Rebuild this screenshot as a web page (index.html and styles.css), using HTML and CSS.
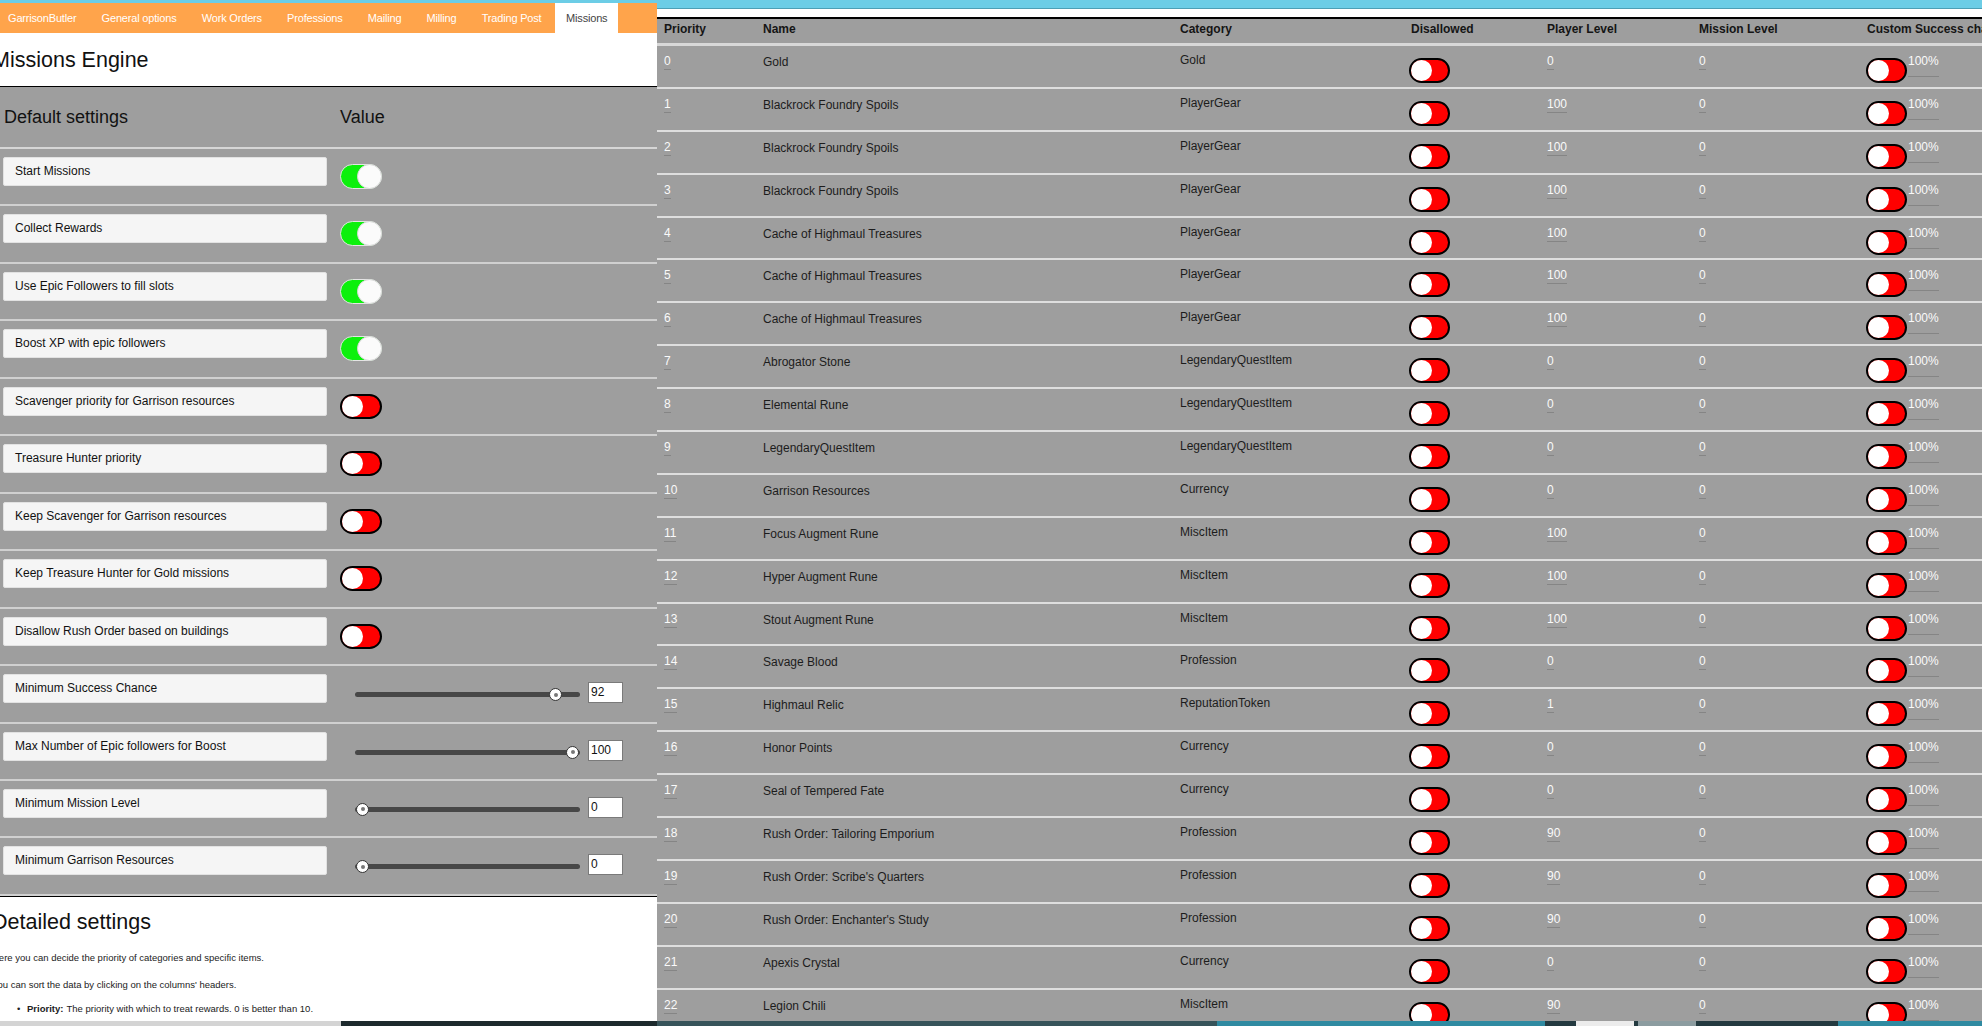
FILE: index.html
```html
<!DOCTYPE html>
<html>
<head>
<meta charset="utf-8">
<title>GarrisonButler - Missions</title>
<link rel="stylesheet" href="styles.css">
</head>
<body>
<div class="main">
  <div class="left">
    <div class="topstrip"></div>
    <div class="tabs">
      <div class="tab first">GarrisonButler</div>
      <div class="tab">General options</div>
      <div class="tab">Work Orders</div>
      <div class="tab">Professions</div>
      <div class="tab">Mailing</div>
      <div class="tab">Milling</div>
      <div class="tab">Trading Post</div>
      <div class="tab active">Missions</div>
    </div>
    <div class="head-area">
      <h1 class="shift">Missions Engine</h1>
    </div>
    <div class="gray">
      <div class="ghead"><div class="gh1">Default settings</div><div class="gh2">Value</div></div>
      <div class="grow"><div class="lbl">Start Missions</div><span class="tg on"></span></div>
      <div class="grow"><div class="lbl">Collect Rewards</div><span class="tg on"></span></div>
      <div class="grow"><div class="lbl">Use Epic Followers to fill slots</div><span class="tg on"></span></div>
      <div class="grow"><div class="lbl">Boost XP with epic followers</div><span class="tg on"></span></div>
      <div class="grow"><div class="lbl">Scavenger priority for Garrison resources</div><span class="tg off"></span></div>
      <div class="grow"><div class="lbl">Treasure Hunter priority</div><span class="tg off"></span></div>
      <div class="grow"><div class="lbl">Keep Scavenger for Garrison resources</div><span class="tg off"></span></div>
      <div class="grow"><div class="lbl">Keep Treasure Hunter for Gold missions</div><span class="tg off"></span></div>
      <div class="grow"><div class="lbl">Disallow Rush Order based on buildings</div><span class="tg off"></span></div>
      <div class="grow"><div class="lbl">Minimum Success Chance</div><div class="slider"><span class="thumb" style="--v:92"></span></div><div class="num">92</div></div>
      <div class="grow"><div class="lbl">Max Number of Epic followers for Boost</div><div class="slider"><span class="thumb" style="--v:100"></span></div><div class="num">100</div></div>
      <div class="grow"><div class="lbl">Minimum Mission Level</div><div class="slider"><span class="thumb" style="--v:0"></span></div><div class="num">0</div></div>
      <div class="grow"><div class="lbl">Minimum Garrison Resources</div><div class="slider"><span class="thumb" style="--v:0"></span></div><div class="num">0</div></div>
    </div>
    <div class="detail">
      <div class="shift">
        <h2>Detailed settings</h2>
        <p class="p1">Here you can decide the priority of categories and specific items.</p>
        <p class="p2">You can sort the data by clicking on the columns' headers.</p>
        <ul><li><b>Priority:</b> The priority with which to treat rewards. 0 is better than 10.</li></ul>
      </div>
    </div>
  </div>

  <div class="right">
    <div class="rtop"></div>
    <div class="rwhite"></div>
    <div class="thead">
      <div class="c">Priority</div><div class="c">Name</div><div class="c">Category</div><div class="c">Disallowed</div><div class="c">Player Level</div><div class="c">Mission Level</div><div class="c">Custom Success chance</div>
    </div>
    <div class="trow"><div class="c pri"><span class="ed">0</span></div><div class="c name">Gold</div><div class="c cat">Gold</div><div class="c dis"><span class="tg off sm"></span></div><div class="c pl"><span class="ed">0</span></div><div class="c ml"><span class="ed">0</span></div><div class="c cus"><span class="tg off sm"></span><span class="pct">100%</span></div></div>
    <div class="trow"><div class="c pri"><span class="ed">1</span></div><div class="c name">Blackrock Foundry Spoils</div><div class="c cat">PlayerGear</div><div class="c dis"><span class="tg off sm"></span></div><div class="c pl"><span class="ed">100</span></div><div class="c ml"><span class="ed">0</span></div><div class="c cus"><span class="tg off sm"></span><span class="pct">100%</span></div></div>
    <div class="trow"><div class="c pri"><span class="ed">2</span></div><div class="c name">Blackrock Foundry Spoils</div><div class="c cat">PlayerGear</div><div class="c dis"><span class="tg off sm"></span></div><div class="c pl"><span class="ed">100</span></div><div class="c ml"><span class="ed">0</span></div><div class="c cus"><span class="tg off sm"></span><span class="pct">100%</span></div></div>
    <div class="trow"><div class="c pri"><span class="ed">3</span></div><div class="c name">Blackrock Foundry Spoils</div><div class="c cat">PlayerGear</div><div class="c dis"><span class="tg off sm"></span></div><div class="c pl"><span class="ed">100</span></div><div class="c ml"><span class="ed">0</span></div><div class="c cus"><span class="tg off sm"></span><span class="pct">100%</span></div></div>
    <div class="trow"><div class="c pri"><span class="ed">4</span></div><div class="c name">Cache of Highmaul Treasures</div><div class="c cat">PlayerGear</div><div class="c dis"><span class="tg off sm"></span></div><div class="c pl"><span class="ed">100</span></div><div class="c ml"><span class="ed">0</span></div><div class="c cus"><span class="tg off sm"></span><span class="pct">100%</span></div></div>
    <div class="trow"><div class="c pri"><span class="ed">5</span></div><div class="c name">Cache of Highmaul Treasures</div><div class="c cat">PlayerGear</div><div class="c dis"><span class="tg off sm"></span></div><div class="c pl"><span class="ed">100</span></div><div class="c ml"><span class="ed">0</span></div><div class="c cus"><span class="tg off sm"></span><span class="pct">100%</span></div></div>
    <div class="trow"><div class="c pri"><span class="ed">6</span></div><div class="c name">Cache of Highmaul Treasures</div><div class="c cat">PlayerGear</div><div class="c dis"><span class="tg off sm"></span></div><div class="c pl"><span class="ed">100</span></div><div class="c ml"><span class="ed">0</span></div><div class="c cus"><span class="tg off sm"></span><span class="pct">100%</span></div></div>
    <div class="trow"><div class="c pri"><span class="ed">7</span></div><div class="c name">Abrogator Stone</div><div class="c cat">LegendaryQuestItem</div><div class="c dis"><span class="tg off sm"></span></div><div class="c pl"><span class="ed">0</span></div><div class="c ml"><span class="ed">0</span></div><div class="c cus"><span class="tg off sm"></span><span class="pct">100%</span></div></div>
    <div class="trow"><div class="c pri"><span class="ed">8</span></div><div class="c name">Elemental Rune</div><div class="c cat">LegendaryQuestItem</div><div class="c dis"><span class="tg off sm"></span></div><div class="c pl"><span class="ed">0</span></div><div class="c ml"><span class="ed">0</span></div><div class="c cus"><span class="tg off sm"></span><span class="pct">100%</span></div></div>
    <div class="trow"><div class="c pri"><span class="ed">9</span></div><div class="c name">LegendaryQuestItem</div><div class="c cat">LegendaryQuestItem</div><div class="c dis"><span class="tg off sm"></span></div><div class="c pl"><span class="ed">0</span></div><div class="c ml"><span class="ed">0</span></div><div class="c cus"><span class="tg off sm"></span><span class="pct">100%</span></div></div>
    <div class="trow"><div class="c pri"><span class="ed">10</span></div><div class="c name">Garrison Resources</div><div class="c cat">Currency</div><div class="c dis"><span class="tg off sm"></span></div><div class="c pl"><span class="ed">0</span></div><div class="c ml"><span class="ed">0</span></div><div class="c cus"><span class="tg off sm"></span><span class="pct">100%</span></div></div>
    <div class="trow"><div class="c pri"><span class="ed">11</span></div><div class="c name">Focus Augment Rune</div><div class="c cat">MiscItem</div><div class="c dis"><span class="tg off sm"></span></div><div class="c pl"><span class="ed">100</span></div><div class="c ml"><span class="ed">0</span></div><div class="c cus"><span class="tg off sm"></span><span class="pct">100%</span></div></div>
    <div class="trow"><div class="c pri"><span class="ed">12</span></div><div class="c name">Hyper Augment Rune</div><div class="c cat">MiscItem</div><div class="c dis"><span class="tg off sm"></span></div><div class="c pl"><span class="ed">100</span></div><div class="c ml"><span class="ed">0</span></div><div class="c cus"><span class="tg off sm"></span><span class="pct">100%</span></div></div>
    <div class="trow"><div class="c pri"><span class="ed">13</span></div><div class="c name">Stout Augment Rune</div><div class="c cat">MiscItem</div><div class="c dis"><span class="tg off sm"></span></div><div class="c pl"><span class="ed">100</span></div><div class="c ml"><span class="ed">0</span></div><div class="c cus"><span class="tg off sm"></span><span class="pct">100%</span></div></div>
    <div class="trow"><div class="c pri"><span class="ed">14</span></div><div class="c name">Savage Blood</div><div class="c cat">Profession</div><div class="c dis"><span class="tg off sm"></span></div><div class="c pl"><span class="ed">0</span></div><div class="c ml"><span class="ed">0</span></div><div class="c cus"><span class="tg off sm"></span><span class="pct">100%</span></div></div>
    <div class="trow"><div class="c pri"><span class="ed">15</span></div><div class="c name">Highmaul Relic</div><div class="c cat">ReputationToken</div><div class="c dis"><span class="tg off sm"></span></div><div class="c pl"><span class="ed">1</span></div><div class="c ml"><span class="ed">0</span></div><div class="c cus"><span class="tg off sm"></span><span class="pct">100%</span></div></div>
    <div class="trow"><div class="c pri"><span class="ed">16</span></div><div class="c name">Honor Points</div><div class="c cat">Currency</div><div class="c dis"><span class="tg off sm"></span></div><div class="c pl"><span class="ed">0</span></div><div class="c ml"><span class="ed">0</span></div><div class="c cus"><span class="tg off sm"></span><span class="pct">100%</span></div></div>
    <div class="trow"><div class="c pri"><span class="ed">17</span></div><div class="c name">Seal of Tempered Fate</div><div class="c cat">Currency</div><div class="c dis"><span class="tg off sm"></span></div><div class="c pl"><span class="ed">0</span></div><div class="c ml"><span class="ed">0</span></div><div class="c cus"><span class="tg off sm"></span><span class="pct">100%</span></div></div>
    <div class="trow"><div class="c pri"><span class="ed">18</span></div><div class="c name">Rush Order: Tailoring Emporium</div><div class="c cat">Profession</div><div class="c dis"><span class="tg off sm"></span></div><div class="c pl"><span class="ed">90</span></div><div class="c ml"><span class="ed">0</span></div><div class="c cus"><span class="tg off sm"></span><span class="pct">100%</span></div></div>
    <div class="trow"><div class="c pri"><span class="ed">19</span></div><div class="c name">Rush Order: Scribe's Quarters</div><div class="c cat">Profession</div><div class="c dis"><span class="tg off sm"></span></div><div class="c pl"><span class="ed">90</span></div><div class="c ml"><span class="ed">0</span></div><div class="c cus"><span class="tg off sm"></span><span class="pct">100%</span></div></div>
    <div class="trow"><div class="c pri"><span class="ed">20</span></div><div class="c name">Rush Order: Enchanter's Study</div><div class="c cat">Profession</div><div class="c dis"><span class="tg off sm"></span></div><div class="c pl"><span class="ed">90</span></div><div class="c ml"><span class="ed">0</span></div><div class="c cus"><span class="tg off sm"></span><span class="pct">100%</span></div></div>
    <div class="trow"><div class="c pri"><span class="ed">21</span></div><div class="c name">Apexis Crystal</div><div class="c cat">Currency</div><div class="c dis"><span class="tg off sm"></span></div><div class="c pl"><span class="ed">0</span></div><div class="c ml"><span class="ed">0</span></div><div class="c cus"><span class="tg off sm"></span><span class="pct">100%</span></div></div>
    <div class="trow"><div class="c pri"><span class="ed">22</span></div><div class="c name">Legion Chili</div><div class="c cat">MiscItem</div><div class="c dis"><span class="tg off sm"></span></div><div class="c pl"><span class="ed">90</span></div><div class="c ml"><span class="ed">0</span></div><div class="c cus"><span class="tg off sm"></span><span class="pct">100%</span></div></div>
  </div>
</div>
<div class="taskbar"></div>
</body>
</html>
```

FILE: styles.css
```css
html, body {
  margin: 0;
  padding: 0;
}
body {
  width: 1982px;
  height: 1026px;
  overflow: hidden;
  font-family: "Liberation Sans", Arial, sans-serif;
  background: #fff;
  display: flex;
  flex-direction: column;
  color: #1a1a1a;
}
.main {
  display: flex;
  height: 1021px;
  overflow: hidden;
  flex: none;
}

/* ---------- left panel ---------- */
.left {
  width: 657px;
  flex: none;
  display: flex;
  flex-direction: column;
  overflow: hidden;
  background: #fff;
}
.topstrip {
  height: 3px;
  background: #6ccde6;
  flex: none;
}
.tabs {
  height: 30px;
  flex: none;
  background: #ffa44b;
  display: flex;
  align-items: stretch;
  font-size: 11px;
  letter-spacing: -0.18px;
  color: #fff;
}
.tab {
  padding: 0 12.6px;
  line-height: 30px;
  white-space: nowrap;
}
.tab.first {
  padding-left: 8px;
}
.tab.active {
  background: #fff;
  color: #444;
  padding: 0 11px;
  margin-left: 1px;
  height: 31px;
}
.head-area {
  flex: none;
  border-bottom: 1px solid #000;
  padding-top: 15px;
  height: 38px;
}
.shift {
  margin-left: -8px;
}
h1 {
  margin: 0;
  font-size: 21.5px;
  line-height: 25px;
  font-weight: normal;
  color: #111;
}

.gray {
  background: #9e9e9e;
  border-bottom: 1px solid #000;
  flex: none;
}
.ghead {
  box-sizing: border-box;
  height: 62px;
  padding: 20px 0 0 4px;
  border-bottom: 2px solid #d6d6d6;
  display: flex;
  font-size: 18px;
  line-height: 21px;
  color: #111;
}
.gh1 {
  width: 336px;
}
.grow {
  box-sizing: border-box;
  height: 57.46px;
  border-bottom: 2px solid #d0d0d0;
  display: flex;
  align-items: flex-start;
}
.lbl {
  margin: 8px 0 0 3px;
  width: 324px;
  height: 29px;
  box-sizing: border-box;
  background: #f5f5f5;
  border: 1px solid #e2e2e2;
  border-radius: 2px;
  padding-left: 11px;
  font-size: 12px;
  line-height: 27px;
  color: #111;
  white-space: nowrap;
}
.grow .tg {
  margin: 15px 0 0 13px;
}
.slider {
  margin: 26px 0 0 28px;
  width: 225px;
  height: 5px;
  border-radius: 3px;
  background: #474747;
  position: relative;
}
.thumb {
  position: absolute;
  top: -4px;
  left: calc(var(--v) * 2.1px + 1px);
  width: 13px;
  height: 13px;
  box-sizing: border-box;
  border-radius: 50%;
  background: #fff;
  border: 1px solid #333;
  display: flex;
  align-items: center;
  justify-content: center;
}
.thumb::after {
  content: "";
  width: 4px;
  height: 4px;
  border-radius: 50%;
  background: #777;
}
.num {
  margin: 16px 0 0 8px;
  width: 35px;
  height: 21px;
  box-sizing: border-box;
  border: 1px solid #7a7a7a;
  background: #fff;
  font-size: 12px;
  line-height: 19px;
  padding-left: 2px;
  color: #111;
}

/* toggles */
.tg {
  display: block;
  flex: none;
  width: 42px;
  height: 25px;
  box-sizing: border-box;
  border-radius: 13px;
  position: relative;
}
.tg.sm {
  width: 41px;
}
.tg.on {
  background: #0cf00c;
  border: 1px solid #e4e4e4;
}
.tg.on::after {
  content: "";
  position: absolute;
  right: -1px;
  top: -1px;
  width: 25px;
  height: 25px;
  box-sizing: border-box;
  border-radius: 50%;
  background: #fbfbfb;
  border: 1px solid #d8d8d8;
}
.tg.off {
  background: #ff0000;
  border: 2px solid #000;
}
.tg.off::after {
  content: "";
  position: absolute;
  left: 0;
  top: 0;
  width: 21px;
  height: 21px;
  border-radius: 50%;
  background: #fff;
}

.detail {
  flex: none;
  height: 124px;
  overflow: hidden;
  padding-top: 13px;
  box-sizing: border-box;
  color: #222;
}
h2 {
  margin: 0;
  font-size: 21.5px;
  line-height: 25px;
  font-weight: normal;
  color: #111;
}
.detail p {
  margin: 0;
  font-size: 9.5px;
  line-height: 12px;
}
.p1 {
  padding-top: 17px;
}
.p2 {
  padding-top: 15px;
}
.detail ul {
  margin: 0;
  padding: 12px 0 0 0;
  list-style: none;
  font-size: 9.5px;
  line-height: 12px;
}
.detail li {
  display: flex;
  padding-left: 25px;
}
.detail li::before {
  content: "\2022";
  width: 10px;
  flex: none;
}
.detail li b {
  margin-right: 3px;
}

/* ---------- right panel (table) ---------- */
.right {
  flex: 1;
  background: #9e9e9e;
  overflow: hidden;
  display: flex;
  flex-direction: column;
}
.rtop {
  flex: none;
  height: 8px;
  background: #6ccde6;
  border-bottom: 1px solid #4d9fb5;
}
.rwhite {
  flex: none;
  height: 8px;
  background: #fff;
  border-bottom: 2px solid #000;
}
.thead,
.trow {
  display: grid;
  grid-template-columns: 99px 417px 231px 136px 152px 168px 122px;
  flex: none;
}
.thead {
  box-sizing: border-box;
  height: 27px;
  border-bottom: 3px solid #d8d8d8;
}
.thead .c {
  padding-top: 3px;
  font-weight: bold;
  color: #151515;
  white-space: nowrap;
  overflow: hidden;
}
.trow {
  box-sizing: border-box;
  height: 42.9px;
  border-bottom: 2px solid #dedede;
}
.c {
  padding-left: 7px;
  font-size: 12px;
  line-height: 14px;
  color: #1c1c1c;
  white-space: nowrap;
}
.pri,
.pl,
.ml {
  padding-top: 8px;
}
.name {
  padding-top: 9px;
}
.cat {
  padding-top: 7px;
}
.dis {
  padding-top: 12px;
  padding-left: 5px;
}
.cus {
  padding-top: 12px;
  padding-left: 6px;
  display: flex;
  align-items: flex-start;
}
.ed {
  display: inline-block;
  color: #fafafa;
  border-bottom: 1px solid #858585;
  padding-bottom: 1px;
}
.pct {
  margin: -4px 0 0 1px;
  color: #fafafa;
  padding-bottom: 8px;
  border-bottom: 1px solid #858585;
}

/* ---------- bottom strip ---------- */
.taskbar {
  flex: none;
  height: 5px;
  background: linear-gradient(to right,
    #d4d4d4 0, #d4d4d4 341px,
    #1d2a2d 341px, #1d2a2d 657px,
    #37545a 657px, #37545a 1217px,
    #2f8aa1 1217px, #2f8aa1 1545px,
    #243a40 1545px, #243a40 1576px,
    #ececec 1576px, #ececec 1634px,
    #243a40 1634px, #243a40 1638px,
    #8c9ca0 1638px, #8c9ca0 1696px,
    #243a40 1696px, #243a40 1838px,
    #2f8aa1 1838px);
}
```
